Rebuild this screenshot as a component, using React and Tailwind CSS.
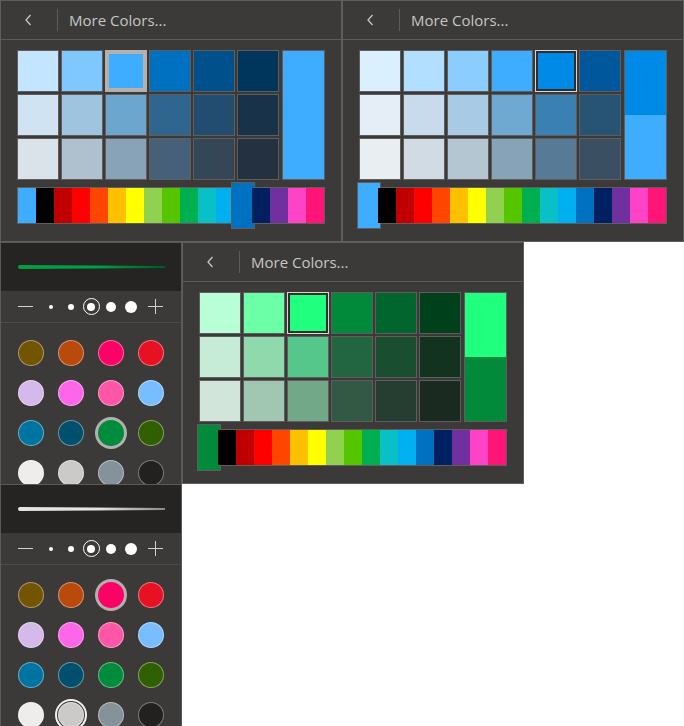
import React from "react";

const standard = [
  "#000000", "#c00000", "#ff0000", "#ff4600", "#ffc000", "#ffff00", "#92d050", "#55c500",
  "#00b050", "#08c0c6", "#00b0f0", "#0070c0", "#002060", "#7030a0", "#ff43c6", "#ff1477",
];

const panels = [
  {
    grid: [
      ["#c3e5ff", "#7fc8ff", "#3fadff", "#0070c0", "#00508c", "#00355c"],
      ["#d0e3f2", "#9fc4e0", "#6ca6cf", "#2f6690", "#234d70", "#183249"],
      ["#dae2ea", "#afc0cf", "#88a2b7", "#46607a", "#354756", "#243140"],
    ],
    sel: [0, 2],
    thick: true,
    big: ["#3fadff"],
    current: "#3fadff",
    stripSel: 12,
  },
  {
    grid: [
      ["#dbf0ff", "#b2deff", "#8bcdff", "#3fadff", "#008ae8", "#00579b"],
      ["#e5eef6", "#c7dbec", "#a8cae5", "#6fa8d0", "#3b80b2", "#275475"],
      ["#e9eef2", "#d1dbe3", "#b5c6d3", "#87a3b8", "#577b96", "#3a5062"],
    ],
    sel: [0, 4],
    thick: false,
    big: ["#008ae8", "#3fadff"],
    current: "#3fadff",
    stripSel: 0,
  },
  {
    grid: [
      ["#b8ffd8", "#6bffa8", "#20ff7e", "#008a3a", "#00662d", "#00401a"],
      ["#c6ecd8", "#8fd9ad", "#55c78b", "#226641", "#1a4e31", "#133321"],
      ["#d1e5da", "#a1c6b1", "#72a888", "#335844", "#263e31", "#1b2a21"],
    ],
    sel: [0, 2],
    thick: false,
    big: ["#20ff7e", "#008a3a"],
    current: "#008a3a",
    stripSel: 0,
  },
];

const penColors = [
  ["#735400", "#b94a0c", "#ff0066", "#e81123"],
  ["#d4b9ea", "#fe66ea", "#ff56a8", "#78bdff"],
  ["#0074a0", "#004f6d", "#008c3c", "#305f00"],
  ["#eeedec", "#cbcac9", "#859299", "#222120"],
];

function Chevron() {
  return (
    <svg width="7" height="12" viewBox="0 0 7 12">
      <polyline points="5.5,1 1,6 5.5,11" fill="none" stroke="#c8c6c4" strokeWidth="1.3" />
    </svg>
  );
}

function ColorPanel({ p }) {
  const strip = [p.current, ...standard];
  return (
    <div className="w-[342px] h-[242px] shrink-0 bg-[#3b3a39] border border-[#605e5c] flex flex-col">
      {/* header */}
      <div className="h-[39px] flex items-center pl-[24px] border-b border-[#5c5b59]">
        <Chevron />
        <div className="ml-[25px] w-[1px] h-[22px] bg-[#5c5b59]" />
        <span className="ml-[11px] text-[15px] text-[#c8c6c4] leading-none">More Colors...</span>
      </div>

      <div className="px-[16px] pt-[10px]">
        <div className="flex gap-[3px]">
          <div className="grid grid-cols-6 gap-[2px]">
            {p.grid.map((row, r) =>
              row.map((c, i) => {
                const isSel = p.sel[0] === r && p.sel[1] === i;
                if (isSel && p.thick) {
                  return (
                    <div key={r + "-" + i} className="w-[42px] h-[42px] border-[4px] border-[#b3b0ad]" style={{ background: c }} />
                  );
                }
                if (isSel) {
                  return (
                    <div key={r + "-" + i} className="w-[42px] h-[42px] border border-[#d8d6d4] p-[2px] bg-[#2f2e2d]">
                      <div className="w-full h-full" style={{ background: c }} />
                    </div>
                  );
                }
                return (
                  <div key={r + "-" + i} className="w-[42px] h-[42px] border border-[#605e5c]" style={{ background: c }} />
                );
              })
            )}
          </div>
          <div className="w-[43px] h-[130px] border border-[#605e5c] flex flex-col">
            {p.big.map((c) => (
              <div key={c} className="flex-1" style={{ background: c }} />
            ))}
          </div>
        </div>

        <div className="mt-[7px] h-[37px] border border-[#605e5c] flex">
          {strip.map((c, i) => (
            <div key={i} className="relative w-[18px] h-full" style={{ background: c }}>
              {p.stripSel === i && (
                <div
                  className="absolute -top-[6px] -bottom-[6px] -left-[3px] -right-[3px] border border-[#605e5c]"
                  style={{ background: c }}
                />
              )}
            </div>
          ))}
        </div>
      </div>
    </div>
  );
}

function Stroke({ from, to }) {
  const id = "g" + from.slice(1);
  return (
    <svg width="148" height="8" viewBox="0 0 148 8">
      <defs>
        <linearGradient id={id} x1="0" x2="1" y1="0" y2="0">
          <stop offset="0" stopColor={from} />
          <stop offset="0.55" stopColor={from} />
          <stop offset="1" stopColor={to} />
        </linearGradient>
      </defs>
      <path d="M2 2 L147 3 L147 5 L2 6 A2 2 0 0 1 2 2 Z" fill={`url(#${id})`} />
    </svg>
  );
}

function PenPanel({ stroke, sel, hover }) {
  return (
    <div className="w-[182px] h-[242px] shrink-0 overflow-hidden bg-[#3b3a39] border-t border-x border-[#5a5957] flex flex-col">
      <div className="h-[48px] shrink-0 bg-[#252423] flex items-center pl-[17px]">
        <Stroke from={stroke[0]} to={stroke[1]} />
      </div>

      <div className="h-[32px] shrink-0 flex items-center pl-[14px] border-b border-[#4c4b4a]">
        <div className="w-[21px] flex justify-center">
          <div className="w-[15px] h-[1px] bg-[#d2d0ce]" />
        </div>
        <div className="ml-[5px] flex items-center">
          <div className="w-[20px] flex justify-center">
            <div className="w-[4px] h-[4px] rounded-full bg-white" />
          </div>
          <div className="w-[20px] flex justify-center">
            <div className="w-[6px] h-[6px] rounded-full bg-white" />
          </div>
          <div className="w-[20px] flex justify-center">
            <div className="w-[17px] h-[17px] rounded-full border-[1.5px] border-white flex items-center justify-center">
              <div className="w-[8px] h-[8px] rounded-full bg-white" />
            </div>
          </div>
          <div className="w-[20px] flex justify-center">
            <div className="w-[10px] h-[10px] rounded-full bg-white" />
          </div>
          <div className="w-[20px] flex justify-center">
            <div className="w-[12px] h-[12px] rounded-full bg-white" />
          </div>
        </div>
        <div className="ml-[4px] w-[20px] flex justify-center">
          <svg width="15" height="15" viewBox="0 0 15 15">
            <line x1="0" y1="7.5" x2="15" y2="7.5" stroke="#d2d0ce" strokeWidth="1" />
            <line x1="7.5" y1="0" x2="7.5" y2="15" stroke="#d2d0ce" strokeWidth="1" />
          </svg>
        </div>
      </div>

      <div className="pl-[10px] pt-[10px] grid grid-cols-[repeat(4,40px)] auto-rows-[40px]">
        {penColors.map((row, r) =>
          row.map((c, i) => {
            const isSel = sel[0] === r && sel[1] === i;
            const isHover = hover && hover[0] === r && hover[1] === i;
            return (
              <div key={r + "-" + i} className="flex items-center justify-center">
                {isSel ? (
                  <div className="w-[32px] h-[32px] rounded-full bg-[#b3b0ad] p-[3px]">
                    <div className="w-full h-full rounded-full" style={{ background: c }} />
                  </div>
                ) : isHover ? (
                  <div className="w-[32px] h-[32px] rounded-full border-[2px] border-[#f3f2f1] p-[1px]">
                    <div className="w-full h-full rounded-full border border-white/40" style={{ background: c }} />
                  </div>
                ) : (
                  <div className="w-[26px] h-[26px] rounded-full border border-white/40" style={{ background: c }} />
                )}
              </div>
            );
          })
        )}
      </div>
    </div>
  );
}

export default function App() {
  return (
    <div className="w-[684px] h-[726px] overflow-hidden bg-white font-['Open_Sans',sans-serif]">
      <div className="flex">
        <ColorPanel p={panels[0]} />
        <ColorPanel p={panels[1]} />
      </div>
      <div className="flex items-start">
        <div className="flex flex-col">
          <PenPanel stroke={["#00a040", "#005a28"]} sel={[2, 2]} />
          <PenPanel stroke={["#e4e4e4", "#8a8a8a"]} sel={[0, 2]} hover={[3, 1]} />
        </div>
        <ColorPanel p={panels[2]} />
      </div>
    </div>
  );
}
